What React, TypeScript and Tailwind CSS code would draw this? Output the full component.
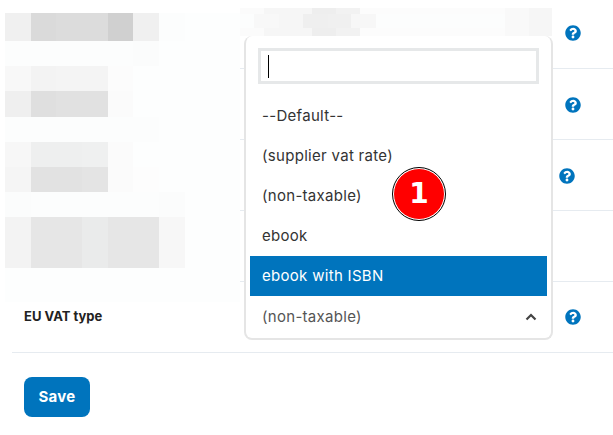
import React from 'react';
import { FaQuestionCircle } from 'react-icons/fa';

const font = "font-['Inter','Noto_Sans',sans-serif]";

const leftMosaic = [
  { h: 'h-[28px]', cells: ['bg-[#f0f0f0]', 'bg-[#dadada]', 'bg-[#dcdcdc]', 'bg-[#dcdcdc]', 'bg-[#d0d0d0]', 'bg-[#f0f0f0]', 'bg-[#fcfdfd]'] },
  { h: 'h-[25px]', cells: ['bg-[#fcfdfd]', 'bg-[#fcfdfd]', 'bg-[#fcfdfd]', 'bg-[#fcfdfd]', 'bg-[#fcfdfd]', 'bg-[#fbfcfc]', 'bg-[#fdfefe]'] },
  { h: 'h-[25px]', cells: ['bg-[#f8f8f8]', 'bg-[#f3f3f3]', 'bg-[#f4f4f4]', 'bg-[#f4f4f4]', 'bg-[#fcfcfc]', 'bg-[#fdfefe]', 'bg-[#fdfefe]'] },
  { h: 'h-[26px]', cells: ['bg-[#efefef]', 'bg-[#dfdfdf]', 'bg-[#e1e1e1]', 'bg-[#e1e1e1]', 'bg-[#fbfbfb]', 'bg-[#fdfefe]', 'bg-[#fdfefe]'] },
  { h: 'h-[25px]', cells: ['bg-[#fcfdfd]', 'bg-[#fcfdfd]', 'bg-[#fcfdfd]', 'bg-[#fcfdfd]', 'bg-[#fcfdfd]', 'bg-[#fcfdfd]', 'bg-[#fdfefe]'] },
  { h: 'h-[25px]', cells: ['bg-[#f7f7f7]', 'bg-[#eeefef]', 'bg-[#eeefef]', 'bg-[#eff0f0]', 'bg-[#fbfbfb]', 'bg-[#fdfefe]', 'bg-[#fdfefe]'] },
  { h: 'h-[25px]', cells: ['bg-[#f5f5f5]', 'bg-[#e2e2e2]', 'bg-[#e2e2e2]', 'bg-[#e4e4e4]', 'bg-[#fbfbfb]', 'bg-[#fdfdfd]', 'bg-[#fdfefe]'] },
  { h: 'h-[25px]', cells: ['bg-[#fbfcfc]', 'bg-[#fcfdfd]', 'bg-[#fcfdfd]', 'bg-[#fcfdfd]', 'bg-[#fcfdfd]', 'bg-[#fcfdfd]', 'bg-[#fbfcfc]'] },
  { h: 'h-[51px]', cells: ['bg-[#f3f3f3]', 'bg-[#e6e6e6]', 'bg-[#e6e6e6]', 'bg-[#eaebeb]', 'bg-[#e6e6e6]', 'bg-[#e6e6e6]', 'bg-[#f7f7f7]'] },
];

const topEdge = [
  { w: 'w-[24px]', c: 'bg-[#fbfbfb]' },
  { w: 'w-[48px]', c: 'bg-[#f6f6f6]' },
  { w: 'w-[24px]', c: 'bg-[#eeeeee]' },
  { w: 'w-[24px]', c: 'bg-[#f2f2f2]' },
  { w: 'w-[145px]', c: 'bg-[#fcfcfc]' },
  { w: 'w-[24px]', c: 'bg-[#f9f9f9]' },
  { w: 'w-[23px]', c: 'bg-[#f6f6f6]' },
];

const topMiddle = [
  { w: 'w-[14px]', c: 'bg-[#fcfdfd]' },
  { w: 'w-[25px]', c: 'bg-[#f8f8f8]' },
  { w: 'w-[24px]', c: 'bg-[#f6f6f6]' },
  { w: 'w-[25px]', c: 'bg-[#efefef]' },
  { w: 'w-[23px]', c: 'bg-[#f0f0f0]' },
  { w: 'w-[25px]', c: 'bg-[#f7f7f7]' },
  { w: 'w-[129px]', c: 'bg-[#fcfdfd]' },
  { w: 'w-[24px]', c: 'bg-[#f9f9f9]' },
  { w: 'w-[23px]', c: 'bg-[#f6f6f6]' },
];

const options = ['--Default--', '(supplier vat rate)', '(non-taxable)', 'ebook'];

function Help() {
  return <FaQuestionCircle className="text-[#0074bd] text-base" />;
}

export default function App() {
  return (
    <div className={`relative w-[613px] h-[435px] overflow-hidden bg-white ${font}`}>
      <div className="pl-3">
        <div className="h-[69px] pb-[2px] border-b border-[#e6ebf0] flex items-center justify-end pr-[32px]">
          <Help />
        </div>
        <div className="h-[71px] pt-[2px] border-b border-[#e6ebf0] flex items-center justify-end pr-[32px]">
          <Help />
        </div>
        <div className="h-[71px] pt-[2px] border-b border-[#e6ebf0] flex items-center justify-end pr-[38px]">
          <Help />
        </div>
        <div className="h-[71px] border-b border-[#e6ebf0]" />
        <div className="h-[71px] border-b border-[#e6ebf0] flex items-center justify-between pl-3 pr-[32px]">
          <span className="text-[13px] font-bold text-[#222222]">EU VAT type</span>
          <Help />
        </div>
      </div>

      <div className="pl-6 pt-6">
        <button className="w-[66px] h-10 rounded-lg bg-[#0074bd] text-white text-[15px] font-bold tracking-[0.3px]">Save</button>
      </div>

      {/* blurred regions */}
      <div className="absolute left-[5px] top-[13px] w-[235px] h-[289px] bg-[#fdfefe]">
        {leftMosaic.map((row, i) => (
          <div key={i} className={`flex ${row.h}`}>
            {row.cells.map((c, j) => (
              <div key={j} className={`w-[25.7px] ${c}`} />
            ))}
          </div>
        ))}
      </div>
      <div className="absolute left-[240px] top-[8px] w-[312px]">
        <div className="flex h-[6px]">
          {topEdge.map((m, i) => (
            <div key={i} className={`${m.w} ${m.c}`} />
          ))}
        </div>
        <div className="flex h-[14px]">
          {topMiddle.map((m, i) => (
            <div key={i} className={`${m.w} ${m.c}`} />
          ))}
        </div>
        <div className="flex h-[8px]">
          {topEdge.map((m, i) => (
            <div key={i} className={`${m.w} ${m.c}`} />
          ))}
        </div>
      </div>

      {/* open select */}
      <div className="absolute left-[244px] top-[36px] w-[309px] h-[304px] bg-white border-2 border-t-0 border-[#e5e5e5] rounded-lg tracking-[0.3px]">
        <div className="mx-3 mt-3 h-9 border-[3px] border-[#e6e8e9] flex items-center pl-[7px]">
          <div className="w-px h-[23px] bg-black" />
        </div>
        <div className="mt-3 mx-1">
          {options.map((o) => (
            <div key={o} className="h-10 flex items-center pl-3 text-[15px] text-[#333333]">{o}</div>
          ))}
          <div className="h-10 flex items-center pl-3 text-[15px] text-white bg-[#0074bd]">ebook with ISBN</div>
          <div className="h-[42px] flex items-center justify-between pl-3 pr-[10px] text-[15px] text-[#555555]">
            <span>(non-taxable)</span>
            <svg width="12" height="8" viewBox="0 0 12 8" fill="none" stroke="#444444" strokeWidth="2.2">
              <path d="M1.500 6.500 6 2l4.500 4.500" />
            </svg>
          </div>
        </div>
      </div>

      {/* step badge */}
      <div className="absolute left-[393px] top-[168px] w-[52px] h-[52px] rounded-full bg-[#ff0000] border border-white outline outline-1 outline-black flex items-center justify-center text-white text-[28px] font-bold font-['DejaVu_Sans',sans-serif]">
        1
      </div>
    </div>
  );
}
